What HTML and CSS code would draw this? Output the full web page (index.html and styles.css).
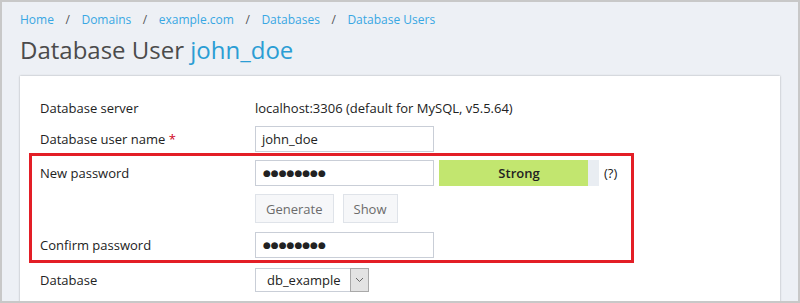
FILE: index.html
```html
<!DOCTYPE html>
<html lang="en">
<head>
  <meta charset="UTF-8" />
  <title>Database User john_doe</title>
  <link rel="stylesheet" href="styles.css">
</head>

<body>
  <div class="frame">
    <!-- breadcrumbs -->
    <div class="breadcrumbs">
      <a href="#">Home</a>
      <span class="sep">/</span>
      <a href="#">Domains</a>
      <span class="sep">/</span>
      <a href="#">example.com</a>
      <span class="sep">/</span>
      <a href="#">Databases</a>
      <span class="sep">/</span>
      <a href="#">Database Users</a>
    </div>

    <h1 class="page-title">Database User <span class="page-title-name">john_doe</span></h1>

    <!-- form card -->
    <div class="card">
      <div class="row row-server">
        <div class="label">Database server</div>
        <div class="value">localhost:3306 (default for MySQL, v5.5.64)</div>
      </div>

      <div class="row row-user">
        <div class="label">Database user name <span class="required">*</span></div>
        <div class="field">john_doe</div>
      </div>

      <!-- highlighted password block -->
      <div class="highlight">
        <div class="row row-pass">
          <div class="label">New password</div>
          <div class="field field-pass">●●●●●●●●</div>
          <div class="strength">
            <div class="strength-fill"></div>
            <span class="strength-text">Strong</span>
          </div>
          <a class="hint" href="#">(?)</a>
        </div>

        <div class="row row-buttons">
          <div class="label"></div>
          <button class="btn">Generate</button>
          <button class="btn">Show</button>
        </div>

        <div class="row row-confirm">
          <div class="label">Confirm password</div>
          <div class="field field-pass">●●●●●●●●</div>
        </div>
      </div>

      <div class="row row-db">
        <div class="label">Database</div>
        <div class="select">
          <span class="select-text">db_example</span>
          <span class="select-arrow">
            <svg width="9" height="6" viewBox="0 0 9 6">
              <polyline points="1,1 4.5,4.5 8,1" fill="none" stroke="#666" stroke-width="1"/>
            </svg>
          </span>
        </div>
      </div>
    </div>
  </div>
</body>
</html>
```

FILE: styles.css
```css
body {
  margin: 0;
  padding: 0;
  font-family: "Open Sans", "Liberation Sans", sans-serif;
  color: #333;
}

.frame {
  width: 800px;
  height: 303px;
  box-sizing: border-box;
  border: 2px solid #c8c8c8;
  background-color: #edf0f5;
  overflow: hidden;
  padding: 0 18px;
}

/* breadcrumbs */
.breadcrumbs {
  padding-top: 10px;
  font-size: 12px;
  line-height: 16px;
  display: flex;
}
.breadcrumbs a {
  color: #38a7e3;
  text-decoration: none;
}
.breadcrumbs .sep {
  color: #555;
  width: 27.5px;
  text-align: center;
}

/* title */
.page-title {
  margin: 6px 0 10px;
  font-size: 24px;
  line-height: 32px;
  font-weight: normal;
  color: #4b4b4b;
}
.page-title-name {
  color: #2b9dd4;
}

/* card */
.card {
  background-color: #fff;
  height: 260px;
  padding: 19px 20px 0;
  box-shadow: 0 0 2px rgba(0, 0, 0, 0.3);
  font-size: 13px;
  color: #222;
}

.row {
  display: flex;
  align-items: center;
  min-height: 26px;
}
.row .label {
  width: 215px;
  flex-shrink: 0;
}
.row-server {
  margin-bottom: 5px;
}
.row-user {
  margin-bottom: 1px;
}
.row-pass {
  margin-bottom: 8px;
}
.row-buttons {
  margin-bottom: 9px;
  gap: 9px;
}
.row-buttons .label {
  width: 206px;
}
.row-db {
  margin-top: 4px;
}

.required {
  color: #d0021b;
}

/* inputs */
.field {
  width: 179px;
  height: 26px;
  box-sizing: border-box;
  border: 1px solid #c9ced7;
  padding: 0 6px;
  line-height: 24px;
  color: #222;
}
.field-pass {
  font-family: "DejaVu Sans", sans-serif;
  font-size: 9px;
  letter-spacing: 0;
  padding-left: 7px;
}

/* highlight annotation */
.highlight {
  width: 605px;
  box-sizing: border-box;
  margin-left: -11px;
  border: 3px solid #e31e26;
  padding: 4px 0 2px 8px;
}

/* strength meter */
.strength {
  position: relative;
  width: 160px;
  height: 26px;
  margin-left: 5px;
  background-color: #e9edf2;
  display: flex;
  align-items: center;
  justify-content: center;
}
.strength-fill {
  position: absolute;
  left: 0;
  top: 0;
  bottom: 0;
  width: 149px;
  background-color: #c2e66f;
}
.strength-text {
  position: relative;
  font-weight: 600;
  color: #222;
}
.hint {
  margin-left: 5px;
  color: #222;
  text-decoration: none;
}

/* buttons */
.btn {
  height: 29px;
  padding: 0 10px;
  font-family: inherit;
  font-size: 13px;
  color: #6b6b6b;
  background-color: #f6f7f9;
  border: 1px solid #dfe3e9;
  cursor: pointer;
}

/* select */
.select {
  width: 114px;
  height: 24px;
  box-sizing: border-box;
  border: 1px solid #c9ced7;
  display: flex;
  align-items: stretch;
}
.select-text {
  flex: 1;
  padding-left: 11px;
  line-height: 22px;
}
.select-arrow {
  width: 17px;
  background-color: #e3e3e3;
  border: 1px solid #a9a9a9;
  margin: -1px -1px -1px 0;
  display: flex;
  align-items: center;
  justify-content: center;
}
```
